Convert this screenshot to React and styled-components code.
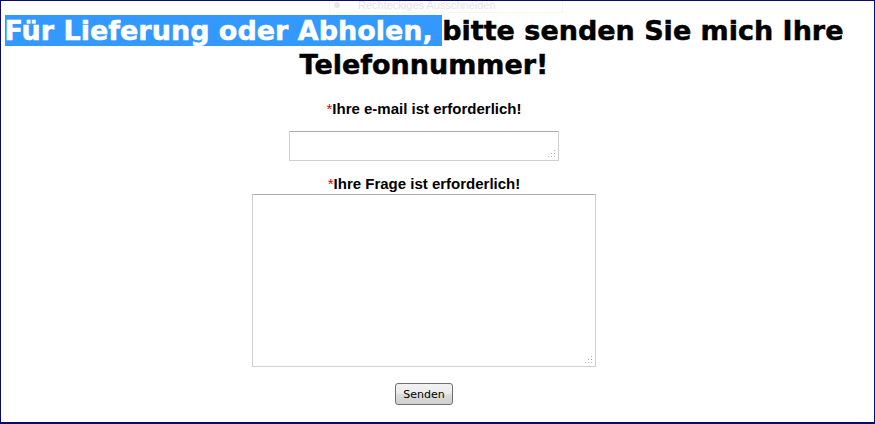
import styled, { createGlobalStyle } from "styled-components"

const Global = createGlobalStyle`
  html, body {
    margin: 0;
    padding: 0;
    background: #ffffff;
  }
  body {
    font-family: "Liberation Sans", Arial, sans-serif;
  }
`

const App = () => {
  return (
    <>
      <Global />
      <Frame>
        <GhostMenu>
          <span className="dot" />
          Rechteckiges Ausschneiden
        </GhostMenu>
        <Title>
          <Marked>Für Lieferung oder Abholen, </Marked>bitte senden Sie mich Ihre Telefonnummer!
        </Title>
        <Form onSubmit={(e) => e.preventDefault()}>
          <Label>
            <Star>*</Star>Ihre e-mail ist erforderlich!
          </Label>
          <Field $w={270} $h={30} $after={14} />
          <Label $tight>
            <Star>*</Star>Ihre Frage ist erforderlich!
          </Label>
          <Field $w={344} $h={173} $after={16} />
          <SendButton type="submit">Senden</SendButton>
        </Form>
      </Frame>
    </>
  )
}

export default App

const Frame = styled.div`
  position: relative;
  box-sizing: border-box;
  width: 875px;
  height: 424px;
  border: 1px solid #0a0a6e;
  border-bottom-width: 2px;
  padding: 13px 27px 0 0;
  overflow: hidden;
`

const GhostMenu = styled.div`
  position: absolute;
  top: -4px;
  left: 328px;
  width: 228px;
  height: 14px;
  display: flex;
  align-items: center;
  gap: 18px;
  font-family: "Liberation Sans", Arial, sans-serif;
  font-size: 11px;
  color: #e4e4e4;
  border: 1px solid #f6f6f6;
  padding-left: 4px;
  .dot {
    width: 6px;
    height: 6px;
    border-radius: 50%;
    background: #e6e6e6;
  }
`

const Title = styled.h1`
  margin: 0;
  text-align: center;
  font-family: "DejaVu Sans", Verdana, sans-serif;
  font-weight: bold;
  font-size: 27px;
  line-height: 34px;
  color: #000;
  -webkit-text-stroke: 0.5px #000;
`

const Marked = styled.span`
  background: #3399ff;
  color: #fff;
  -webkit-text-stroke: 0.5px #fff;
`

const Form = styled.form`
  display: flex;
  flex-direction: column;
  align-items: center;
  margin-top: 18px;
`

const Label = styled.div`
  font-family: "Liberation Sans", Arial, sans-serif;
  font-weight: bold;
  font-size: 15px;
  line-height: 18px;
  color: #000;
  margin-bottom: ${(p) => (p.$tight ? "1px" : "13px")};
`

const Star = styled.span`
  color: #e00000;
  font-weight: normal;
`

const dot = "radial-gradient(circle, #b5b5b5 0.8px, transparent 1px)"

const Field = styled.textarea`
  box-sizing: border-box;
  width: ${(p) => p.$w}px;
  height: ${(p) => p.$h}px;
  border: 1px solid #cfcfcf;
  border-top-color: #ababab;
  border-radius: 1px;
  margin: 0 0 ${(p) => p.$after}px;
  padding: 2px;
  resize: none;
  font-family: "Liberation Mono", monospace;
  font-size: 13px;
  background:
    ${dot} right 2px bottom 2px / 3px 3px no-repeat,
    ${dot} right 5px bottom 2px / 3px 3px no-repeat,
    ${dot} right 8px bottom 2px / 3px 3px no-repeat,
    ${dot} right 2px bottom 5px / 3px 3px no-repeat,
    ${dot} right 5px bottom 5px / 3px 3px no-repeat,
    ${dot} right 2px bottom 8px / 3px 3px no-repeat,
    #fff;
`

const SendButton = styled.button`
  box-sizing: border-box;
  width: 58px;
  height: 22px;
  padding: 0;
  font-family: "DejaVu Sans", Tahoma, sans-serif;
  font-size: 11px;
  color: #000;
  border: 1px solid #707070;
  border-radius: 3px;
  background: linear-gradient(#f2f2f2 0%, #ebebeb 50%, #dddddd 51%, #cfcfcf 100%);
  cursor: pointer;
`
